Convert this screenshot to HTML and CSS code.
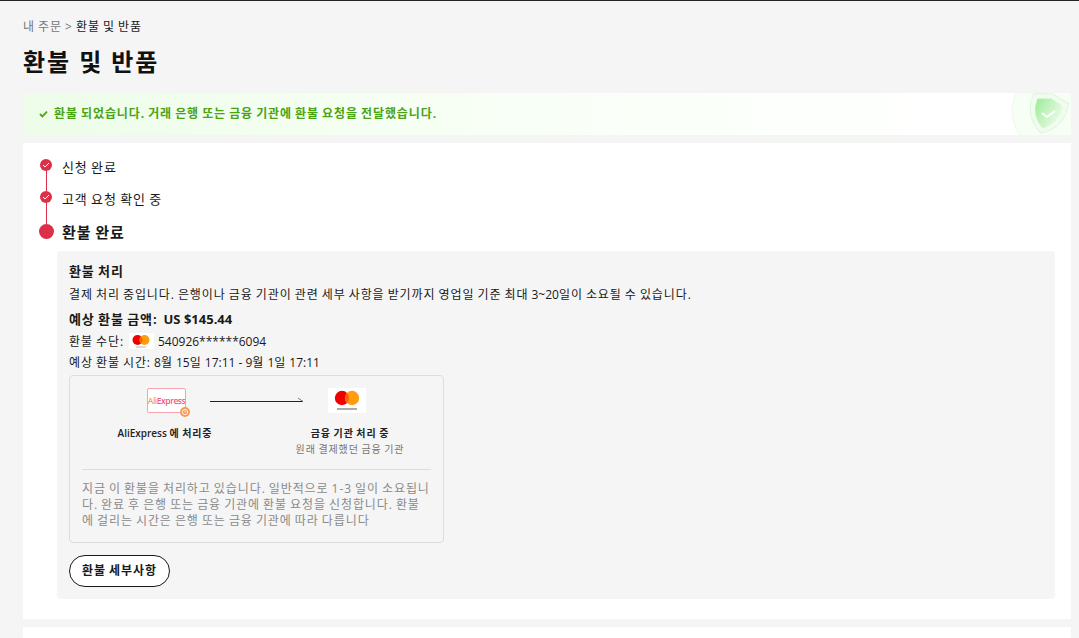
FILE: index.html
```html
<!DOCTYPE html>
<html lang="ko">
<head>
<meta charset="utf-8">
<title>환불 및 반품</title>
<link rel="stylesheet" href="styles.css">
</head>
<body>
<main class="page">
  <nav class="crumbs"><span class="crumb-muted">내 주문 &gt;</span> <span>환불 및 반품</span></nav>
  <h1 class="title">환불 및 반품</h1>
  <section class="notice">
    <svg class="notice-check" width="9" height="8" viewBox="0 0 9 8"><path d="M1 4l2.4 2.4L8 1.6" fill="none" stroke="#52a814" stroke-width="1.8"/></svg>
    <span>환불 되었습니다. 거래 은행 또는 금융 기관에 환불 요청을 전달했습니다.</span>
    <svg class="notice-art" width="60" height="42" viewBox="0 0 60 42">
      <defs><linearGradient id="shield" x1="0" y1="0" x2="1" y2="0.3"><stop offset="0" stop-color="#9dec99"/><stop offset="1" stop-color="#e2fadf"/></linearGradient></defs>
      <circle cx="41" cy="18" r="40" fill="#f7fef5" stroke="#ecfae9"/>
      <g transform="rotate(16 36 20)">
        <path d="M36 0l18 5c2 14-2 27-18 36C20 32 16 19 18 5z" fill="#f0fcee" stroke="#def7da"/>
        <path d="M36 5l13 4c1 10-2 20-13 27C25 29 22 19 23 9z" fill="url(#shield)"/>
      </g>
      <path d="M31 20l5 4 8-6" fill="none" stroke="#fff" stroke-width="2"/>
    </svg>
  </section>
  <section class="card">
    <ol class="steps">
      <li class="step">
        <div class="rail"><span class="dot"><svg width="8" height="6" viewBox="0 0 8 6"><path d="M1 3l2 2 4-4" fill="none" stroke="#fff" stroke-width="1"/></svg></span><span class="link"></span></div>
        <span class="step-label">신청 완료</span>
      </li>
      <li class="step step-second">
        <div class="rail"><span class="dot"><svg width="8" height="6" viewBox="0 0 8 6"><path d="M1 3l2 2 4-4" fill="none" stroke="#fff" stroke-width="1"/></svg></span><span class="link"></span></div>
        <span class="step-label">고객 요청 확인 중</span>
      </li>
      <li class="step step-current">
        <div class="rail"><span class="dot dot-big"></span></div>
        <span class="step-label">환불 완료</span>
      </li>
    </ol>
    <section class="detail">
      <h2 class="detail-title">환불 처리</h2>
      <p class="line line-desc">결제 처리 중입니다. 은행이나 금융 기관이 관련 세부 사항을 받기까지 영업일 기준 최대 <span class="lat">3~20</span>일이 소요될 수 있습니다.</p>
      <p class="amount"><span>예상 환불 금액:</span><span class="lat">US $145.44</span></p>
      <div class="line method">
        <span>환불 수단:</span>
        <span class="mc-badge">
          <svg width="18" height="13" viewBox="0 0 18 13"><circle cx="5.5" cy="5" r="5" fill="#f00000"/><circle cx="12.5" cy="5" r="5" fill="#ff9c10"/><path d="M9 1.4a5 5 0 0 1 0 7.2 5 5 0 0 1 0-7.2z" fill="#ff5f00"/><rect x="4" y="11.5" width="10" height="1" fill="#b5b5b5"/></svg>
        </span>
        <span class="lat">540926******6094</span>
      </div>
      <p class="line">예상 환불 시간: <span class="lat">8</span>월 <span class="lat">15</span>일 <span class="lat">17:11 - 9</span>월 <span class="lat">1</span>일 <span class="lat">17:11</span></p>
      <div class="flow-box">
        <div class="flow">
          <div class="flow-col flow-col-ae">
            <div class="ae-logo"><span class="ae-text"><span class="ae-ali">Ali</span>Express</span><span class="ae-clock"><svg width="10" height="10" viewBox="0 0 10 10"><circle cx="5" cy="5" r="5" fill="#f79a53"/><circle cx="5" cy="5" r="2.7" fill="none" stroke="#fff" stroke-width=".8"/><path d="M5 3.4V5h1.4" fill="none" stroke="#fff" stroke-width=".7"/></svg></span></div>
            <div class="flow-name"><span class="lat">AliExpress</span> 에 처리중</div>
          </div>
          <svg class="arrow" width="94" height="8" viewBox="0 0 94 8"><path d="M0 4.5h93" stroke="#222" fill="none"/><path d="M88 1l5 3.5" stroke="#777" fill="none"/></svg>
          <div class="flow-col flow-col-bank">
            <div class="mc-logo"><svg width="26" height="22" viewBox="0 0 26 22"><circle cx="8" cy="8" r="7.2" fill="#f00000"/><circle cx="18" cy="8" r="7.2" fill="#ff9c10"/><path d="M13 3a7.2 7.2 0 0 1 0 10 7.2 7.2 0 0 1 0-10z" fill="#ff5f00"/><rect x="3" y="18" width="20" height="2" fill="#aaa"/></svg></div>
            <div class="flow-name">금융 기관 처리 중</div>
            <div class="flow-sub">원래 결제했던 금융 기관</div>
          </div>
        </div>
        <p class="flow-note">지금 이 환불을 처리하고 있습니다. 일반적으로 1-3 일이 소요됩니다. 완료 후 은행 또는 금융 기관에 환불 요청을 신청합니다. 환불에 걸리는 시간은 은행 또는 금융 기관에 따라 다릅니다</p>
      </div>
      <button class="btn" type="button">환불 세부사항</button>
    </section>
  </section>
  <section class="card card-next"></section>
</main>
</body>
</html>
```
FILE: styles.css
```css
* { box-sizing: border-box; }
html, body { margin: 0; height: 100%; overflow: hidden; }
body {
  background: #f5f5f5;
  border-top: 1px solid #222;
  color: #191919;
  font-family: "Open Sans", "Noto Sans CJK KR", sans-serif;
  font-size: 12px;
  line-height: 18px;
  letter-spacing: .075em;
  word-spacing: -.075em;
}
.lat { letter-spacing: 0; word-spacing: 0; }
.page { padding: 17px 8px 0 23px; }
.crumbs { height: 18px; color: #191919; }
.crumb-muted { color: #757575; }
.title { margin: 8px 0 0; font-size: 24px; line-height: 36px; font-weight: 700; color: #111; letter-spacing: .08em; word-spacing: 0; }
.notice {
  display: flex; align-items: center; gap: 6px;
  height: 42px; margin-top: 13px; padding-left: 16px;
  position: relative; overflow: hidden;
  background: linear-gradient(90deg, #edfde9 0, #f8fff6 45%, #fff 90%);
  color: #4aa312; font-weight: 700;
}
.notice-art { position: absolute; right: 0; top: 0; }
.card { margin-top: 8px; background: #fff; padding: 16px 16px 20px 17px; }
.steps { list-style: none; margin: 0; padding: 0; }
.step { display: flex; gap: 10px; height: 32px; font-size: 13px; }
.step-second { height: 33px; }
.step-current { height: 27px; font-size: 15px; font-weight: 600; }
.rail { display: flex; flex-direction: column; align-items: center; width: 12px; }
.dot { display: flex; align-items: center; justify-content: center; flex: none; width: 12px; height: 12px; border-radius: 50%; background: #dd2f4a; }
.dot-big { width: 15px; height: 15px; }
.link { flex: 1; width: 1px; margin-left: 1px; background: #dd2f4a; }
.step-label { line-height: 16px; }
.step-current .step-label { line-height: 17px; }
.detail { margin-left: 17px; padding: 11px 12px 12px; min-height: 348px; background: #f5f5f5; border-radius: 4px; }
.detail-title { margin: 0; font-size: 13px; line-height: 18px; font-weight: 700; }
.line { margin: 0; line-height: 21px; }
.line-desc { margin-top: 4px; }
.amount { display: flex; gap: 6px; margin: 4px 0 0; font-size: 13px; line-height: 20px; font-weight: 700; }
.method { display: flex; align-items: center; gap: 4px; margin-top: 1px; height: 22px; }
.mc-badge { display: flex; justify-content: center; align-items: center; width: 25px; height: 16px; background: #fff; margin-left: 1px; }
.flow-box { width: 375px; height: 168px; margin-top: 2px; padding: 12px 12px 0; border: 1px solid #ddd; border-radius: 4px; }
.flow { display: flex; align-items: flex-start; height: 82px; border-bottom: 1px solid #ddd; }
.flow-col { display: flex; flex: none; flex-direction: column; align-items: center; font-size: 10px; line-height: 16px; }
.flow-col-ae { width: 96px; margin-left: 35px; margin-right: -3px; }
.flow-col-bank { width: 108px; margin-left: -8px; }
.flow-name { font-weight: 600; color: #222; white-space: nowrap; }
.flow-sub { color: #757575; white-space: nowrap; }
.ae-logo { display: flex; position: relative; align-items: center; justify-content: center; width: 39px; height: 25px; margin: 0 0 12px 3px; background: #fff; border: 1px solid #f5a3ae; border-radius: 2px; }
.ae-text { font-size: 8.5px; font-weight: 600; letter-spacing: -.45px; color: #ee5a7c; }
.ae-ali { color: #f7a04f; }
.ae-clock { display: flex; position: absolute; right: -5px; bottom: -5px; }
.arrow { margin-top: 9px; flex: none; }
.mc-logo { display: flex; align-items: center; justify-content: center; width: 38px; height: 25px; margin: 0 6px 12px 0; background: #fff; }
.flow-note { margin: 11px 0 0; padding-right: 1px; line-height: 16px; color: #8a8a8a; word-break: break-all; letter-spacing: .075em; }
.btn { display: block; width: 101px; height: 32px; margin-top: 12px; padding: 0; background: #fff; border: 1px solid #191919; border-radius: 16px; color: #191919; font: 700 12px/18px "Open Sans", "Noto Sans CJK KR", sans-serif; letter-spacing: .075em; word-spacing: -.075em; }
.card-next { height: 40px; }
```
